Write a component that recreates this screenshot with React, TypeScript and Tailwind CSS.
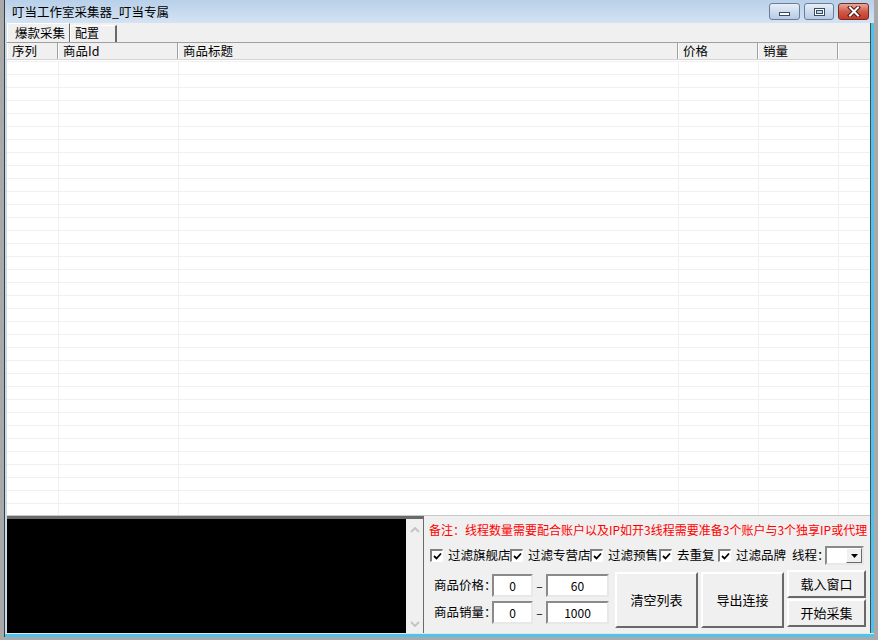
import React from "react";

const FONT = "font-['Noto_Sans_CJK_SC','Noto_Sans',sans-serif]";

const COLS = [
  { label: "序列", w: "w-[51px]" },
  { label: "商品Id", w: "w-[120px]" },
  { label: "商品标题", w: "w-[500px]" },
  { label: "价格", w: "w-[80px]" },
  { label: "销量", w: "w-[80px]" },
  { label: "", w: "flex-1" },
];

const ROWS = Array.from({ length: 35 }, (_, i) => i);

function CheckBox() {
  return (
    <div className="w-[13px] h-[13px] shrink-0 border-t-2 border-l-2 border-t-[#808080] border-l-[#808080] border-b border-r border-b-white border-r-white bg-white flex items-center justify-center">
      <svg width="9" height="8" viewBox="0 0 9 8">
        <path d="M1 4 L3.5 6.5 L8 1.5" fill="none" stroke="#000" strokeWidth="1.8" />
      </svg>
    </div>
  );
}

function Sunken({ className, children }: { className: string; children?: React.ReactNode }) {
  return (
    <div
      className={`border-2 border-t-[#8a8a8a] border-l-[#8a8a8a] border-b-[#e8e8e8] border-r-[#e8e8e8] bg-white flex items-center justify-center text-[12px] ${className}`}
    >
      {children}
    </div>
  );
}

function Btn({ className, children }: { className: string; children: React.ReactNode }) {
  return (
    <div
      className={`border-2 border-t-white border-l-white border-b-[#696969] border-r-[#696969] bg-[#f0f0f0] flex items-center justify-center text-[13px] text-black ${className}`}
    >
      {children}
    </div>
  );
}

function Filter({ label, gap }: { label: string; gap: string }) {
  return (
    <div className={`flex items-center ${gap}`}>
      <CheckBox />
      <span className="ml-[5px] text-[12.5px] leading-none whitespace-nowrap">{label}</span>
    </div>
  );
}

export default function App() {
  return (
    <div className={`w-[878px] h-[640px] bg-[#a9a9a9] pl-[4px] overflow-hidden ${FONT}`}>
      <div className="w-[870px] h-[637px] flex flex-col border-l border-[#3c3c3c]">
        {/* title bar */}
        <div className="h-[23px] shrink-0 bg-gradient-to-b from-[#b8d0e9] to-[#d4e3f3] flex items-start pl-[7px] pr-[5px]">
          <span className="text-[12.5px] leading-none mt-[6px] text-black">叮当工作室采集器_叮当专属</span>
          <div className="ml-auto flex mt-[3px] gap-[4px]">
            <div className="w-[31px] h-[17px] rounded-[3px] border border-[#6a7e98] bg-gradient-to-b from-[#e6eef8] to-[#b6cbe3] flex items-end justify-center pb-[3px]">
              <div className="w-[11px] h-[4px] bg-white border border-[#3a4a60]" />
            </div>
            <div className="w-[30px] h-[17px] rounded-[3px] border border-[#6a7e98] bg-gradient-to-b from-[#e6eef8] to-[#b6cbe3] flex items-center justify-center">
              <div className="w-[11px] h-[8px] border border-[#3a4a60] bg-white p-[1px]">
                <div className="w-full h-full border border-[#3a4a60] bg-[#c8d8ea]" />
              </div>
            </div>
            <div className="w-[31px] h-[17px] rounded-[3px] border border-[#7a2a22] bg-gradient-to-b from-[#e8a89a] via-[#d05a48] to-[#c13a2a] flex items-center justify-center">
              <svg width="14" height="11" viewBox="0 0 14 11">
                <path d="M3 1.5 L11 9.5 M11 1.5 L3 9.5" stroke="#4a1a14" strokeWidth="4" strokeLinecap="square" />
                <path d="M3 1.5 L11 9.5 M11 1.5 L3 9.5" stroke="#ffffff" strokeWidth="2" strokeLinecap="square" />
              </svg>
            </div>
          </div>
        </div>

        <div className="flex flex-1">
          <div className="w-[2px] bg-[#c8dcf0]" />
          {/* client area */}
          <div className="w-[863px] flex flex-col bg-[#f0f0f0] text-black">
            {/* tabs */}
            <div className="h-[19px] shrink-0 flex items-end text-[12.5px] leading-[12px]">
              <div className="w-[63px] h-[19px] border-t border-l border-white border-r border-r-[#696969] flex items-center pl-[7px] bg-[#f0f0f0]">
                爆款采集
              </div>
              <div className="w-[47px] h-[17px] border-t border-l border-white border-r-2 border-r-[#696969] pl-[4px] pt-[1px] text-[12px] leading-[12px]">
                配置
              </div>
            </div>

            {/* list header */}
            <div className="h-[18px] shrink-0 flex border-t border-[#a0a0a0] border-b border-b-[#d4d4d4] text-[12.5px] leading-none">
              {COLS.map((c, i) => (
                <div
                  key={i}
                  className={`${c.w} h-full flex items-center pl-[5px] pt-[1px] shadow-[inset_1px_0_0_#ffffff] ${
                    i < COLS.length - 1 ? "border-r border-[#a0a0a0]" : ""
                  }`}
                >
                  {c.label}
                </div>
              ))}
            </div>

            {/* list body */}
            <div className="h-[456px] shrink-0 bg-white pt-[1px] overflow-hidden border-b border-[#c8c8c8]">
              {ROWS.map((r) => (
                <div key={r} className="h-[13px] flex border-t border-[#f0f0f0]">
                  {COLS.map((c, i) => (
                    <div key={i} className={`${c.w} h-full ${i > 0 ? "border-l border-[#f0f0f0]" : ""}`} />
                  ))}
                </div>
              ))}
            </div>

            {/* bottom panel */}
            <div className="flex flex-1">
              {/* log box */}
              <div className="w-[416px] flex flex-col">
                <div className="h-[3px] bg-[#6a6a6a]" />
                <div className="flex flex-1">
                  <div className="w-[399px] bg-black" />
                  <div className="w-[17px] bg-[#f0f0f0] flex flex-col items-center justify-between pt-[8px] pb-[6px]">
                    <svg width="10" height="6" viewBox="0 0 10 6">
                      <path d="M1 5 L5 1 L9 5" fill="none" stroke="#c4c4c4" strokeWidth="2" />
                    </svg>
                    <svg width="10" height="6" viewBox="0 0 10 6">
                      <path d="M1 1 L5 5 L9 1" fill="none" stroke="#c4c4c4" strokeWidth="2" />
                    </svg>
                  </div>
                </div>
              </div>

              {/* controls */}
              <div className="flex-1 border-l border-[#6a6a6a] flex flex-col">
                <div className="mt-[7px] ml-[5px] h-[14px] text-[12px] leading-[14px] text-[#ff0000] whitespace-nowrap">
                  备注：线程数量需要配合账户以及IP如开3线程需要准备3个账户与3个独享IP或代理
                </div>

                <div className="mt-[9px] h-[19px] flex items-center pl-[6px]">
                  <Filter label="过滤旗舰店" gap="w-[80px]" />
                  <Filter label="过滤专营店" gap="w-[80px]" />
                  <Filter label="过滤预售" gap="w-[69px]" />
                  <Filter label="去重复" gap="w-[59px]" />
                  <Filter label="过滤品牌" gap="w-[74px]" />
                  <span className="w-[33px] text-[12.5px] leading-none whitespace-nowrap">线程：</span>
                  <div className="w-[39px] h-[19px] border-2 border-t-[#8a8a8a] border-l-[#8a8a8a] border-b-[#e8e8e8] border-r-[#e8e8e8] bg-white flex justify-end">
                    <div className="w-[16px] h-full border border-t-white border-l-white border-b-[#696969] border-r-[#696969] bg-[#f0f0f0] flex items-center justify-center">
                      <svg width="7" height="4" viewBox="0 0 7 4">
                        <path d="M0 0 L7 0 L3.5 4 Z" fill="#000" />
                      </svg>
                    </div>
                  </div>
                </div>

                <div className="mt-[5px] flex pl-[10px]">
                  <div className="flex flex-col gap-[4px] mt-[4px]">
                    <div className="flex items-center h-[23px]">
                      <span className="w-[58px] text-[12.5px] whitespace-nowrap">商品价格：</span>
                      <Sunken className="w-[41px] h-[23px]">0</Sunken>
                      <span className="w-[13px] text-center text-[12px]">–</span>
                      <Sunken className="w-[63px] h-[23px]">60</Sunken>
                    </div>
                    <div className="flex items-center h-[23px]">
                      <span className="w-[58px] text-[12.5px] whitespace-nowrap">商品销量：</span>
                      <Sunken className="w-[41px] h-[23px]">0</Sunken>
                      <span className="w-[13px] text-center text-[12px]">–</span>
                      <Sunken className="w-[63px] h-[23px]">1000</Sunken>
                    </div>
                  </div>
                  <Btn className="ml-[6px] mt-[2px] w-[83px] h-[56px]">清空列表</Btn>
                  <Btn className="ml-[3px] mt-[2px] w-[83px] h-[56px]">导出连接</Btn>
                  <div className="ml-[3px] flex flex-col gap-[1px]">
                    <Btn className="w-[79px] h-[28px]">载入窗口</Btn>
                    <Btn className="w-[79px] h-[28px]">开始采集</Btn>
                  </div>
                </div>
              </div>
            </div>
          </div>
          {/* right frame */}
          <div className="w-[1px] bg-[#4a4a4a]" />
          <div className="w-[3px] bg-[#4cc4ec]" />
        </div>
        <div className="h-[1px] bg-[#e6e6e6] shrink-0" />
        <div className="h-[3px] bg-[#4cc4ec] shrink-0" />
      </div>
    </div>
  );
}
